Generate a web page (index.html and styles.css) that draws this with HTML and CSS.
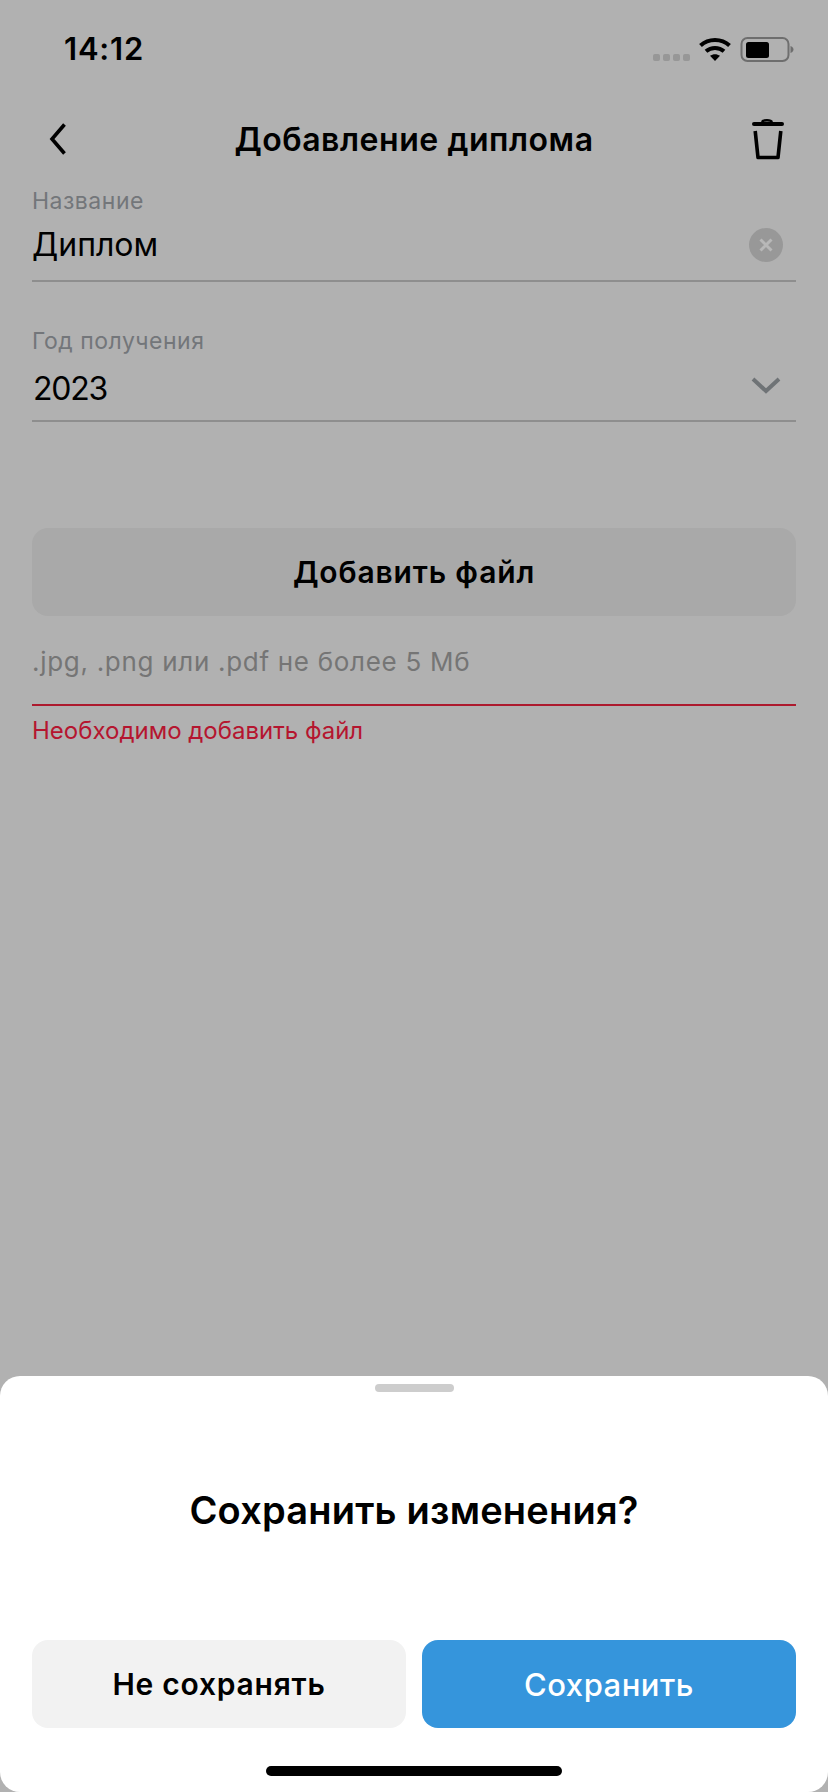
FILE: index.html
```html
<!DOCTYPE html>
<html>
<head>
    <meta charset="utf-8">
    <title>Добавление диплома</title>
    <link rel="stylesheet" href="styles.css">
</head>
<body>
    <div class="screen">
        <div class="status-bar">
            <span class="time">14:12</span>
            <div class="status-icons">
                <div class="signal"><i></i><i></i><i></i><i></i></div>
                <svg class="wifi" width="32" height="24" viewBox="0 0 32 24">
                    <path d="M1.5 8.5C9.5 1 22.5 1 30.5 8.5" fill="none" stroke="#000" stroke-width="4"/>
                    <path d="M7 14.2C12 9.8 20 9.8 25 14.2" fill="none" stroke="#000" stroke-width="4"/>
                    <path d="M11 18.8C14 16.6 18 16.6 21 18.8L16 24Z" fill="#000"/>
                </svg>
                <svg class="battery" width="54" height="26" viewBox="0 0 54 26">
                    <rect x="1.5" y="1" width="47" height="23" rx="6" fill="none" stroke="#6e6e6e" stroke-width="2"/>
                    <rect x="6" y="5" width="23" height="16" rx="2.5" fill="#000"/>
                    <path d="M50.5 9C53 10 53.5 11.5 53.5 12.5S53 15 50.5 16Z" fill="#6e6e6e"/>
                </svg>
            </div>
        </div>

        <div class="nav">
            <svg class="back" width="18" height="36" viewBox="0 0 18 36">
                <path d="M15.5 3.5L3 18L15.5 32.5" fill="none" stroke="#000" stroke-width="3.6"/>
            </svg>
            <h1>Добавление диплома</h1>
            <svg class="trash" width="34" height="42" viewBox="0 0 34 42">
                <path d="M4 5H32" stroke="#000" stroke-width="4" stroke-linecap="round"/>
                <path d="M12 3C13 .6 21 .6 22 3" fill="none" stroke="#000" stroke-width="2.4"/>
                <path d="M5.2 12L8 38.5H28L30.8 12" fill="none" stroke="#000" stroke-width="3.6" stroke-linejoin="round"/>
            </svg>
        </div>

        <div class="form">
            <div class="field">
                <label>Название</label>
                <div class="field-row">
                    <span class="value">Диплом</span>
                    <svg class="clear" width="34" height="34" viewBox="0 0 34 34">
                        <circle cx="17" cy="17" r="17" fill="#989898"/>
                        <path d="M11.5 11.5L22.5 22.5M22.5 11.5L11.5 22.5" stroke="#b8b8b8" stroke-width="3"/>
                    </svg>
                </div>
            </div>

            <div class="field field-year">
                <label>Год получения</label>
                <div class="field-row">
                    <span class="value value-year">2023</span>
                    <svg class="chevron" width="30" height="18" viewBox="0 0 30 18">
                        <path d="M2 3L15 15L28 3" fill="none" stroke="#6f7376" stroke-width="4"/>
                    </svg>
                </div>
            </div>

            <button class="btn-file" type="button">Добавить файл</button>
            <div class="hint">.jpg, .png или .pdf не более 5 Мб</div>
            <div class="error">Необходимо добавить файл</div>
        </div>

        <div class="sheet">
            <div class="handle"></div>
            <h2>Сохранить изменения?</h2>
            <div class="actions">
                <button class="btn btn-light" type="button">Не сохранять</button>
                <button class="btn btn-blue" type="button">Сохранить</button>
            </div>
            <div class="home-bar"></div>
        </div>
    </div>
</body>
</html>
```

FILE: styles.css
```css
body {
    margin: 0;
    padding: 0;
    font-family: Inter, "Noto Sans", sans-serif;
    background: #b1b1b1;
}
.screen {
    width: 828px;
    height: 1792px;
    display: flex;
    flex-direction: column;
    background: #b1b1b1;
    color: #000;
    overflow: hidden;
}

/* status bar */
.status-bar {
    height: 100px;
    box-sizing: border-box;
    padding: 30px 34px 0 64px;
    display: flex;
    justify-content: space-between;
    align-items: flex-start;
}
.time {
    font-size: 31px;
    line-height: 38px;
    font-weight: 600;
    letter-spacing: 0.8px;
}
.status-icons {
    display: flex;
    align-items: flex-start;
}
.signal {
    display: flex;
    gap: 3px;
    margin: 24px 9px 0 0;
}
.signal i {
    width: 7px;
    height: 7px;
    border-radius: 2px;
    background: #979797;
}
.wifi {
    margin-top: 7px;
}
.battery {
    margin: 7px 0 0 9px;
}

/* header */
.nav {
    height: 80px;
    padding: 0 44px 0 49px;
    display: grid;
    grid-template-columns: 98px 1fr 103px;
    align-items: center;
}
.nav h1 {
    margin: 0;
    font-size: 32px;
    line-height: 40px;
    font-weight: 600;
    letter-spacing: 0.55px;
    text-align: center;
}
.back {
    margin-top: -2px;
}
.trash {
    justify-self: end;
    margin-top: -1px;
}

/* form */
.form {
    padding: 0 32px;
}
.field {
    padding: 6px 0 15px;
    border-bottom: 2px solid #8e8e8e;
}
.field-year {
    margin-top: 38px;
}
.field label {
    display: block;
    font-size: 23px;
    line-height: 30px;
    letter-spacing: 0.5px;
    color: #73767a;
}
.field-row {
    height: 40px;
    margin-top: 9px;
    display: flex;
    justify-content: space-between;
    align-items: center;
}
.value {
    font-size: 32px;
    line-height: 40px;
}
.value-year {
    margin: 8px 0 0 1px;
    letter-spacing: -1.2px;
}
.clear {
    margin-right: 13px;
}
.chevron {
    margin-right: 15px;
}
.btn-file {
    display: block;
    width: 100%;
    height: 88px;
    margin-top: 106px;
    border: none;
    border-radius: 16px;
    background: #a9a9a9;
    font-family: inherit;
    font-size: 30px;
    font-weight: 600;
    letter-spacing: 0.85px;
    color: #000;
}
.hint {
    margin-top: 30px;
    padding-bottom: 26px;
    border-bottom: 2px solid #ad1a2e;
    font-size: 26px;
    line-height: 32px;
    letter-spacing: 0.7px;
    color: #757575;
}
.error {
    margin-top: 10px;
    font-size: 24px;
    line-height: 30px;
    color: #b5152f;
}

/* bottom sheet */
.sheet {
    margin-top: auto;
    height: 416px;
    box-sizing: border-box;
    padding: 8px 32px 0;
    display: flex;
    flex-direction: column;
    align-items: center;
    background: #fff;
    border-radius: 20px;
}
.handle {
    width: 79px;
    height: 8px;
    border-radius: 4px;
    background: #cdcdcd;
}
.sheet h2 {
    margin: 93px 0 0;
    font-size: 38px;
    line-height: 50px;
    font-weight: 600;
    letter-spacing: 0.2px;
}
.actions {
    width: 100%;
    margin-top: 105px;
    display: flex;
    gap: 16px;
}
.btn {
    flex: 1;
    height: 88px;
    border: none;
    border-radius: 16px;
    font-family: inherit;
    font-size: 30px;
}
.btn-light {
    background: #f2f2f2;
    color: #000;
    font-weight: 600;
    letter-spacing: 0.75px;
}
.btn-blue {
    background: #3595dc;
    color: #fff;
    font-weight: 500;
    font-size: 31px;
    letter-spacing: 0.5px;
}
.home-bar {
    width: 296px;
    height: 10px;
    margin-top: 38px;
    border-radius: 5px;
    background: #000;
}
```
